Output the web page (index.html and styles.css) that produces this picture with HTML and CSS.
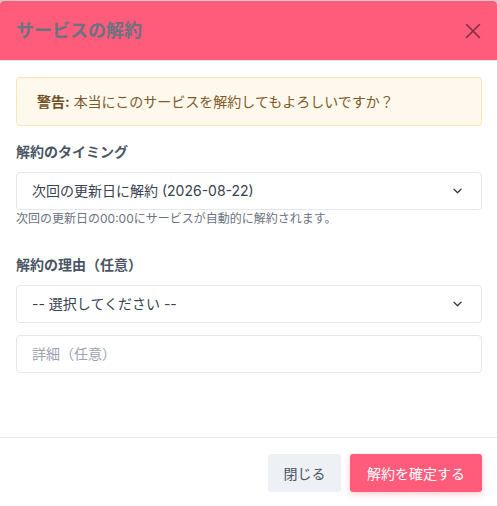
FILE: index.html
```html
<!DOCTYPE html>
<html lang="ja">
<head>
<meta charset="utf-8">
<title>サービスの解約</title>
<link rel="stylesheet" href="styles.css">
</head>
<body>
<div class="modal">
  <header class="modal-header">
    <h2 class="modal-title">サービスの解約</h2>
    <button class="close-btn" aria-label="閉じる">
      <svg width="16" height="16" viewBox="0 0 16 16"><path d="M1.5 1.5 L14.5 14.5 M14.5 1.5 L1.5 14.5" stroke="currentColor" stroke-width="1.6" fill="none" stroke-linecap="round"/></svg>
    </button>
  </header>
  <main class="modal-body">
    <div class="warning"><strong>警告:</strong> 本当にこのサービスを解約してもよろしいですか？</div>
    <label class="field-label">解約のタイミング</label>
    <div class="select">
      <span class="select-text">次回の更新日に解約 (2026-08-22)</span>
      <svg class="chevron" width="9" height="6" viewBox="0 0 9 6"><path d="M1 1.2 L4.5 4.7 L8 1.2" stroke="currentColor" stroke-width="1.4" fill="none" stroke-linecap="round" stroke-linejoin="round"/></svg>
    </div>
    <p class="help">次回の更新日の00:00にサービスが自動的に解約されます。</p>
    <label class="field-label second">解約の理由（任意）</label>
    <div class="select">
      <span class="select-text">-- 選択してください --</span>
      <svg class="chevron" width="9" height="6" viewBox="0 0 9 6"><path d="M1 1.2 L4.5 4.7 L8 1.2" stroke="currentColor" stroke-width="1.4" fill="none" stroke-linecap="round" stroke-linejoin="round"/></svg>
    </div>
    <div class="input"><span class="placeholder">詳細（任意）</span></div>
  </main>
  <footer class="modal-footer">
    <button class="btn btn-secondary">閉じる</button>
    <button class="btn btn-danger">解約を確定する</button>
  </footer>
</div>
</body>
</html>
```
FILE: styles.css
```css
* { box-sizing: border-box; }
html, body { margin: 0; padding: 0; }
body {
  background: #c9c9c9;
  padding-top: 1px;
  font-family: Inter, "Noto Sans CJK JP", sans-serif;
  color: #374151;
}
.modal {
  height: 505px;
  background: #ffffff;
  border-radius: 4px 4px 0 0;
  display: flex;
  flex-direction: column;
  overflow: hidden;
}
.modal-header {
  height: 60px;
  background: #ff5c7c;
  border-bottom: 1px solid #e5e7eb;
  display: flex;
  align-items: center;
  justify-content: space-between;
  padding: 0 15px 0 16px;
  flex: none;
}
.modal-title {
  margin: 0;
  font-size: 18px;
  font-weight: 700;
  color: #6b7280;
  line-height: 24px;
}
.close-btn {
  border: 0;
  background: transparent;
  padding: 0;
  width: 16px;
  height: 16px;
  color: #7f2f45;
  display: flex;
  margin-right: 1px;
}
.modal-body {
  flex: 1;
  padding: 16px 15px 0 16px;
  display: flex;
  flex-direction: column;
}
.warning {
  background: #fff8ed;
  border: 1px solid #fce6b8;
  border-radius: 4px;
  padding: 13px 20px;
  font-size: 14px;
  line-height: 21px;
  color: #7c5a2a;
  margin-bottom: 16px;
}
.warning strong { font-weight: 700; color: #6e4e22; }
.field-label {
  font-size: 14px;
  font-weight: 700;
  line-height: 20px;
  color: #4b5563;
  margin-bottom: 10px;
}
.field-label.second { margin-top: 28px; }
.select, .input {
  height: 38px;
  border: 1px solid #e5e7eb;
  border-radius: 4px;
  display: flex;
  align-items: center;
  justify-content: space-between;
  padding: 0 19px 0 15px;
  font-size: 14px;
  color: #374151;
  background: #fff;
}
.input { margin-top: 12px; }
.select-text { line-height: 20px; }
.chevron { color: #374151; }
.placeholder { color: #9ca3af; line-height: 20px; }
.help {
  margin: 1px 0 0;
  font-size: 12px;
  line-height: 16px;
  color: #6b7280;
}
.modal-footer {
  flex: none;
  border-top: 1px solid #e5e7eb;
  padding: 16px 15px 14px 16px;
  display: flex;
  justify-content: flex-end;
  gap: 9px;
}
.btn {
  height: 38px;
  border: 0;
  border-radius: 3px;
  font-family: Inter, "Noto Sans CJK JP", sans-serif;
  font-size: 14px;
  padding: 0;
  white-space: nowrap;
  text-align: center;
}
.btn-secondary {
  background: #edf0f5;
  color: #4b5563;
  width: 73px;
}
.btn-danger {
  background: #ff5c7c;
  color: #ffffff;
  width: 132px;
  box-shadow: 0 2px 6px rgba(255, 92, 124, 0.35);
}
```
